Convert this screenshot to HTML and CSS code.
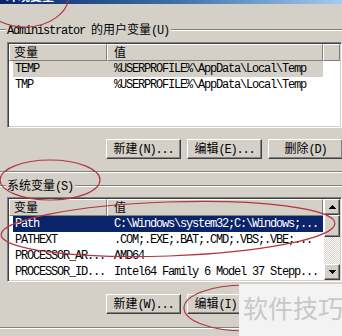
FILE: index.html
```html
<!DOCTYPE html>
<html lang="zh-CN">
<head>
    <meta charset="UTF-8">
    <title>环境变量</title>
    <link rel="stylesheet" href="styles.css">
</head>
<body>
    <div class="dialog">
        <div class="titlebar"><span class="title">环境变量</span></div>

        <section class="group group-user">
            <div class="group-head">
                <span class="rule rule-short"></span>
                <span class="group-label">Administrator <span class="cjk">的用户变量</span>(U)</span>
                <span class="rule"></span>
            </div>
            <div class="listview list-user">
                <div class="lv-content">
                    <div class="lv-header">
                        <div class="hd hd-name"><span class="cjk">变量</span></div>
                        <div class="hd hd-value"><span class="cjk">值</span></div>
                        <div class="hd hd-fill"></div>
                    </div>
                    <div class="lv-row sel-inactive">
                        <span class="cell-name">TEMP</span>
                        <span class="cell-value">%USERPROFILE%\AppData\Local\Temp</span>
                    </div>
                    <div class="lv-row">
                        <span class="cell-name">TMP</span>
                        <span class="cell-value">%USERPROFILE%\AppData\Local\Temp</span>
                    </div>
                </div>
            </div>
            <div class="button-row">
                <button class="btn"><span class="cjk">新建</span>(N)...</button>
                <button class="btn"><span class="cjk">编辑</span>(E)...</button>
                <button class="btn"><span class="cjk">删除</span>(D)</button>
            </div>
        </section>

        <section class="group group-system">
            <div class="group-head">
                <span class="rule rule-short"></span>
                <span class="group-label"><span class="cjk">系统变量</span>(S)</span>
                <span class="rule"></span>
            </div>
            <div class="listview list-system">
                <div class="lv-content">
                    <div class="lv-header">
                        <div class="hd hd-name"><span class="cjk">变量</span></div>
                        <div class="hd hd-value"><span class="cjk">值</span></div>
                    </div>
                    <div class="lv-row sel-active">
                        <span class="cell-name">Path</span>
                        <span class="cell-value">C:\Windows\system32;C:\Windows;...</span>
                    </div>
                    <div class="lv-row">
                        <span class="cell-name">PATHEXT</span>
                        <span class="cell-value">.COM;.EXE;.BAT;.CMD;.VBS;.VBE;...</span>
                    </div>
                    <div class="lv-row">
                        <span class="cell-name">PROCESSOR_AR...</span>
                        <span class="cell-value">AMD64</span>
                    </div>
                    <div class="lv-row">
                        <span class="cell-name">PROCESSOR_ID...</span>
                        <span class="cell-value">Intel64 Family 6 Model 37 Stepp...</span>
                    </div>
                </div>
                <div class="scrollbar">
                    <div class="sb-btn">
                        <svg width="7" height="4" viewBox="0 0 7 4"><path d="M3 0h1v1H3zM2 1h3v1H2zM1 2h5v1H1zM0 3h7v1H0z" fill="#000"/></svg>
                    </div>
                    <div class="sb-track"><div class="sb-thumb"></div></div>
                    <div class="sb-btn">
                        <svg width="7" height="4" viewBox="0 0 7 4"><path d="M0 0h7v1H0zM1 1h5v1H1zM2 2h3v1H2zM3 3h1v1H3z" fill="#000"/></svg>
                    </div>
                </div>
            </div>
            <div class="button-row">
                <button class="btn"><span class="cjk">新建</span>(W)...</button>
                <button class="btn"><span class="cjk">编辑</span>(I)...</button>
                <button class="btn"><span class="cjk">删除</span>(L)</button>
            </div>
        </section>

        <!-- red marker circles drawn over the screenshot -->
        <svg class="marks" width="342" height="336" viewBox="0 0 342 336">
            <g fill="none" stroke="#b4353f" stroke-width="1.2">
                <ellipse cx="25" cy="-5" rx="44" ry="32"/>
                <ellipse cx="50" cy="180" rx="50" ry="20"/>
                <ellipse cx="168" cy="229" rx="167" ry="27" transform="rotate(-2 168 229)"/>
                <ellipse cx="245" cy="308" rx="61" ry="23"/>
            </g>
        </svg>

        <div class="watermark">软件技巧</div>
    </div>
</body>
</html>
```

FILE: styles.css
```css
body {
    margin: 0;
    padding: 0;
    background-color: #d4d0c8;
}
.dialog {
    position: relative;
    width: 342px;
    height: 336px;
    overflow: hidden;
    background-color: #d4d0c8;
    color: #000;
    font-family: "Liberation Mono", "Noto Sans CJK SC", monospace;
    font-size: 12px;
    letter-spacing: -1.2px;
}
.cjk {
    font-family: "Noto Sans CJK SC", sans-serif;
    font-size: 12px;
    letter-spacing: 0;
}
.titlebar {
    height: 4px;
    overflow: hidden;
    background: linear-gradient(to right, #0a246a, #3a6ea5 50%, #a6caf0);
}
.title {
    display: block;
    margin: -10px 0 0 6px;
    line-height: 12px;
    color: #fff;
    font-family: "Noto Sans CJK SC", sans-serif;
    font-size: 12px;
    font-weight: bold;
    letter-spacing: 0;
}

/* group boxes */
.group {
    border-bottom: 1px solid #808080;
    box-shadow: 0 1px 0 #fff;
}
.group-user {
    padding-bottom: 12px;
}
.group-system {
    padding-bottom: 13px;
}
.group-head {
    display: flex;
    align-items: center;
    height: 12px;
}
.group-user .group-head {
    margin-top: 20px;
}
.group-system .group-head {
    margin-top: 8px;
}
.rule {
    flex: 1;
    height: 1px;
    border-top: 1px solid #808080;
    background-color: #fff;
}
.rule-short {
    flex: 0 0 6px;
}
.group-label {
    padding: 0 2px 0 1px;
    line-height: 12px;
    white-space: nowrap;
}

/* list views */
.listview {
    display: flex;
    box-sizing: border-box;
    width: 335px;
    margin-left: 7px;
    padding: 1px;
    border: 1px solid;
    border-color: #808080 #fff #fff #808080;
    box-shadow: inset 1px 1px 0 #404040, inset -1px -1px 0 #d4d0c8;
    background-color: #fff;
}
.list-user {
    height: 86px;
    margin-top: 6px;
}
.list-system {
    height: 85px;
    margin-top: 5px;
}
.lv-content {
    flex: 1;
    overflow: hidden;
}
.lv-header {
    display: flex;
    height: 17px;
}
.hd {
    box-sizing: border-box;
    height: 17px;
    background-color: #d4d0c8;
    border: 1px solid;
    border-color: #fff #808080 #808080 #fff;
    line-height: 14px;
}
.hd-name {
    width: 98px;
    padding-left: 4px;
}
.hd-value {
    width: 216px;
    padding-left: 6px;
}
.hd-fill {
    flex: 1;
}
.lv-row {
    display: flex;
    width: 310px;
    height: 16px;
    margin-left: 4px;
    line-height: 16px;
    white-space: nowrap;
}
.cell-name {
    box-sizing: border-box;
    width: 94px;
    padding-left: 2px;
}
.cell-value {
    padding-left: 7px;
}
.sel-inactive {
    background-color: #d4d0c8;
}
.sel-active {
    background-color: #0a246a;
    color: #fff;
}

/* scrollbar */
.scrollbar {
    display: flex;
    flex-direction: column;
    width: 16px;
}
.sb-btn,
.sb-thumb {
    box-sizing: border-box;
    border: 1px solid;
    border-color: #fff #404040 #404040 #fff;
    box-shadow: inset -1px -1px 0 #808080;
    background-color: #d4d0c8;
}
.sb-btn {
    display: flex;
    align-items: center;
    justify-content: center;
    height: 16px;
}
.sb-track {
    flex: 1;
    background: repeating-conic-gradient(#fff 0 25%, #d4d0c8 0 50%) 0 0 / 2px 2px;
}
.sb-thumb {
    height: 22px;
}

/* buttons */
.button-row {
    display: flex;
    gap: 6px;
    padding-left: 106px;
}
.group-user .button-row {
    margin-top: 11px;
}
.group-system .button-row {
    margin-top: 12px;
}
.btn {
    flex: 0 0 75px;
    height: 20px;
    padding: 0;
    border: 1px solid;
    border-color: #fff #404040 #404040 #fff;
    box-shadow: inset -1px -1px 0 #808080;
    background-color: #d4d0c8;
    color: #000;
    font-family: "Liberation Mono", "Noto Sans CJK SC", monospace;
    font-size: 12px;
    letter-spacing: -1.2px;
    line-height: 16px;
    white-space: nowrap;
}

/* overlays */
.marks {
    position: absolute;
    left: 0;
    top: 0;
    pointer-events: none;
}
.watermark {
    position: absolute;
    left: 239px;
    top: 284px;
    width: 103px;
    height: 52px;
    box-sizing: border-box;
    padding: 11px 0 0 4px;
    background-color: #f3f3f3;
    color: #c8c8c8;
    font-family: "Noto Sans CJK SC", sans-serif;
    font-size: 25px;
    line-height: 25px;
    letter-spacing: 0;
    white-space: nowrap;
}
```
